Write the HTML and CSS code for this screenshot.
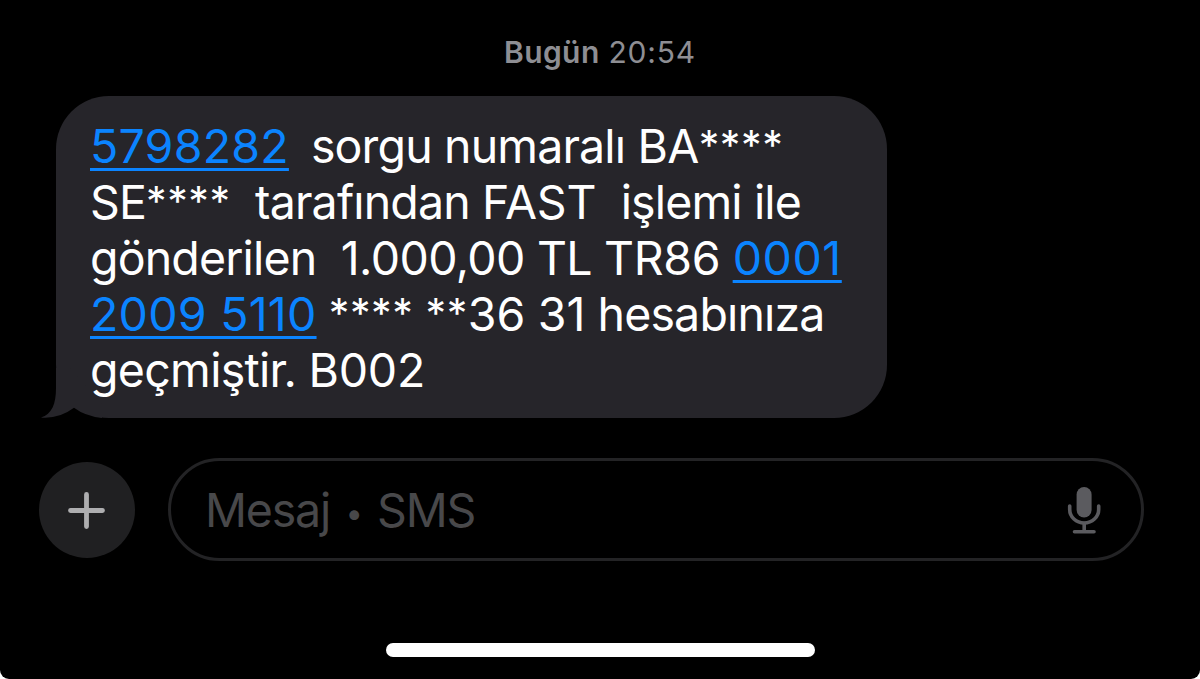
FILE: index.html
```html
<!DOCTYPE html>
<html lang="tr">
<head>
  <meta charset="UTF-8">
  <title>Mesajlar</title>
  <meta name="viewport" content="width=device-width, initial-scale=1.0">
  <link rel="stylesheet" href="styles.css">
</head>
<body>
  <div class="screen">
    <div class="date"><b>Bugün</b> <span class="time">20:54</span></div>

    <div class="bubble">
      <svg class="tail" width="64" height="50" viewBox="0 0 64 50">
        <path d="M16 0V20C16 36 12 46 1 49.500Q19 51 34 39.700Q45 48 62 50V36L30 0Z" fill="#26252a"/>
      </svg>
      <div class="text">
        <p class="line"><a class="num" href="#">5798282</a><span class="gap">&nbsp; </span>sorgu numaralı <span class="caps">BA</span><span class="stars">****</span></p>
        <p class="line">SE<span class="stars">****</span>&nbsp; tarafından <span class="caps-tight">FAST</span>&nbsp; işlemi ile</p>
        <p class="line">gönderilen&nbsp; <span class="amount">1.000,00</span> TL <span class="caps-tight">TR86</span> <a class="num-wide" href="#">0001</a></p>
        <p class="line"><a class="num" href="#">2009 5110</a> <span class="stars">****</span> <span class="stars">**</span><span class="digits">36</span> <span class="digits">31</span> hesabınıza</p>
        <p class="line"><span class="last">geçmiştir. </span><span class="caps-tight">B002</span></p>
      </div>
    </div>

    <div class="composer">
      <button class="add" aria-label="Ekle">
        <svg width="96" height="96" viewBox="0 0 96 96">
          <path d="M31.500 48.500H63.500M47.500 32.500V64.500" stroke="#aeaeb0" stroke-width="4.800" stroke-linecap="round"/>
        </svg>
      </button>
      <div class="field">
        <div class="placeholder">Mesaj<span class="dot">•</span>SMS</div>
        <svg class="mic" width="36" height="50" viewBox="0 0 36 50" fill="none" stroke="#5b5b5f" stroke-width="3.600" stroke-linecap="round">
          <rect x="10.600" y="2" width="15" height="30.500" rx="7.500" fill="#5b5b5f" stroke="none"/>
          <path d="M3.700 21V24.500A14.500 13.500 0 0 0 32.700 24.500V21"/>
          <path d="M18.200 38.500V46.500M8.500 46.800H28"/>
        </svg>
      </div>
    </div>

    <div class="home-bar"></div>
  </div>
</body>
</html>
```

FILE: styles.css
```css
body {
  margin: 0;
  background: #fff;
  font-family: Inter, 'Liberation Sans', sans-serif;
}
.screen {
  display: flex;
  flex-direction: column;
  height: 679px;
  box-sizing: border-box;
  padding-top: 34px;
  background: #000;
  border-radius: 0 0 9px 9px;
}
.date {
  text-align: center;
  font-size: 30px;
  line-height: 36px;
  letter-spacing: .4px;
  color: #8e8e93;
}
.date b {
  font-weight: 600;
}
.time {
  letter-spacing: .8px;
}

/* message */
.bubble {
  position: relative;
  width: 831px;
  height: 322px;
  box-sizing: border-box;
  margin: 26px 0 0 56px;
  padding: 22px 0 0 34px;
  background: #26252a;
  border-radius: 53px;
  color: #fff;
}
.tail {
  position: absolute;
  left: -16px;
  bottom: 0;
}
.text {
  position: relative;
}
.line {
  margin: 0;
  font-size: 46.5px;
  line-height: 56px;
  letter-spacing: -.85px;
  white-space: nowrap;
}
.line a {
  color: #0b84ff;
  text-decoration-thickness: 3px;
  text-underline-offset: 4.5px;
}
.num {
  letter-spacing: .24px;
}
.num-wide {
  letter-spacing: .55px;
}
.digits {
  letter-spacing: 0;
}
.gap {
  letter-spacing: -2.1px;
}
.amount {
  letter-spacing: -.6px;
}
.caps {
  letter-spacing: -.6px;
}
.caps-tight {
  letter-spacing: -.25px;
}
.last {
  letter-spacing: -.7px;
}
.stars {
  font-size: 41px;
  line-height: 0;
  letter-spacing: .6px;
  vertical-align: 3px;
}

/* input row */
.composer {
  display: flex;
  align-items: center;
  gap: 33px;
  margin: 40px 0 0 39px;
}
.add {
  width: 96px;
  height: 96px;
  margin-top: 1px;
  padding: 0;
  border: 0;
  border-radius: 50%;
  background: #202022;
}
.field {
  display: flex;
  align-items: center;
  justify-content: space-between;
  width: 976px;
  height: 103px;
  box-sizing: border-box;
  padding: 0 39px 0 34px;
  border: 3px solid #232325;
  border-radius: 52px;
}
.placeholder {
  display: flex;
  align-items: center;
  padding-top: 2px;
  font-size: 46.5px;
  line-height: 97px;
  letter-spacing: -1.2px;
  color: #48484a;
}
.dot {
  width: 47px;
  padding-top: 4px;
  font-size: 31px;
  text-align: center;
}
.home-bar {
  width: 429px;
  height: 14px;
  margin: auto auto 22px;
  border-radius: 7px;
  background: #fff;
}
```
